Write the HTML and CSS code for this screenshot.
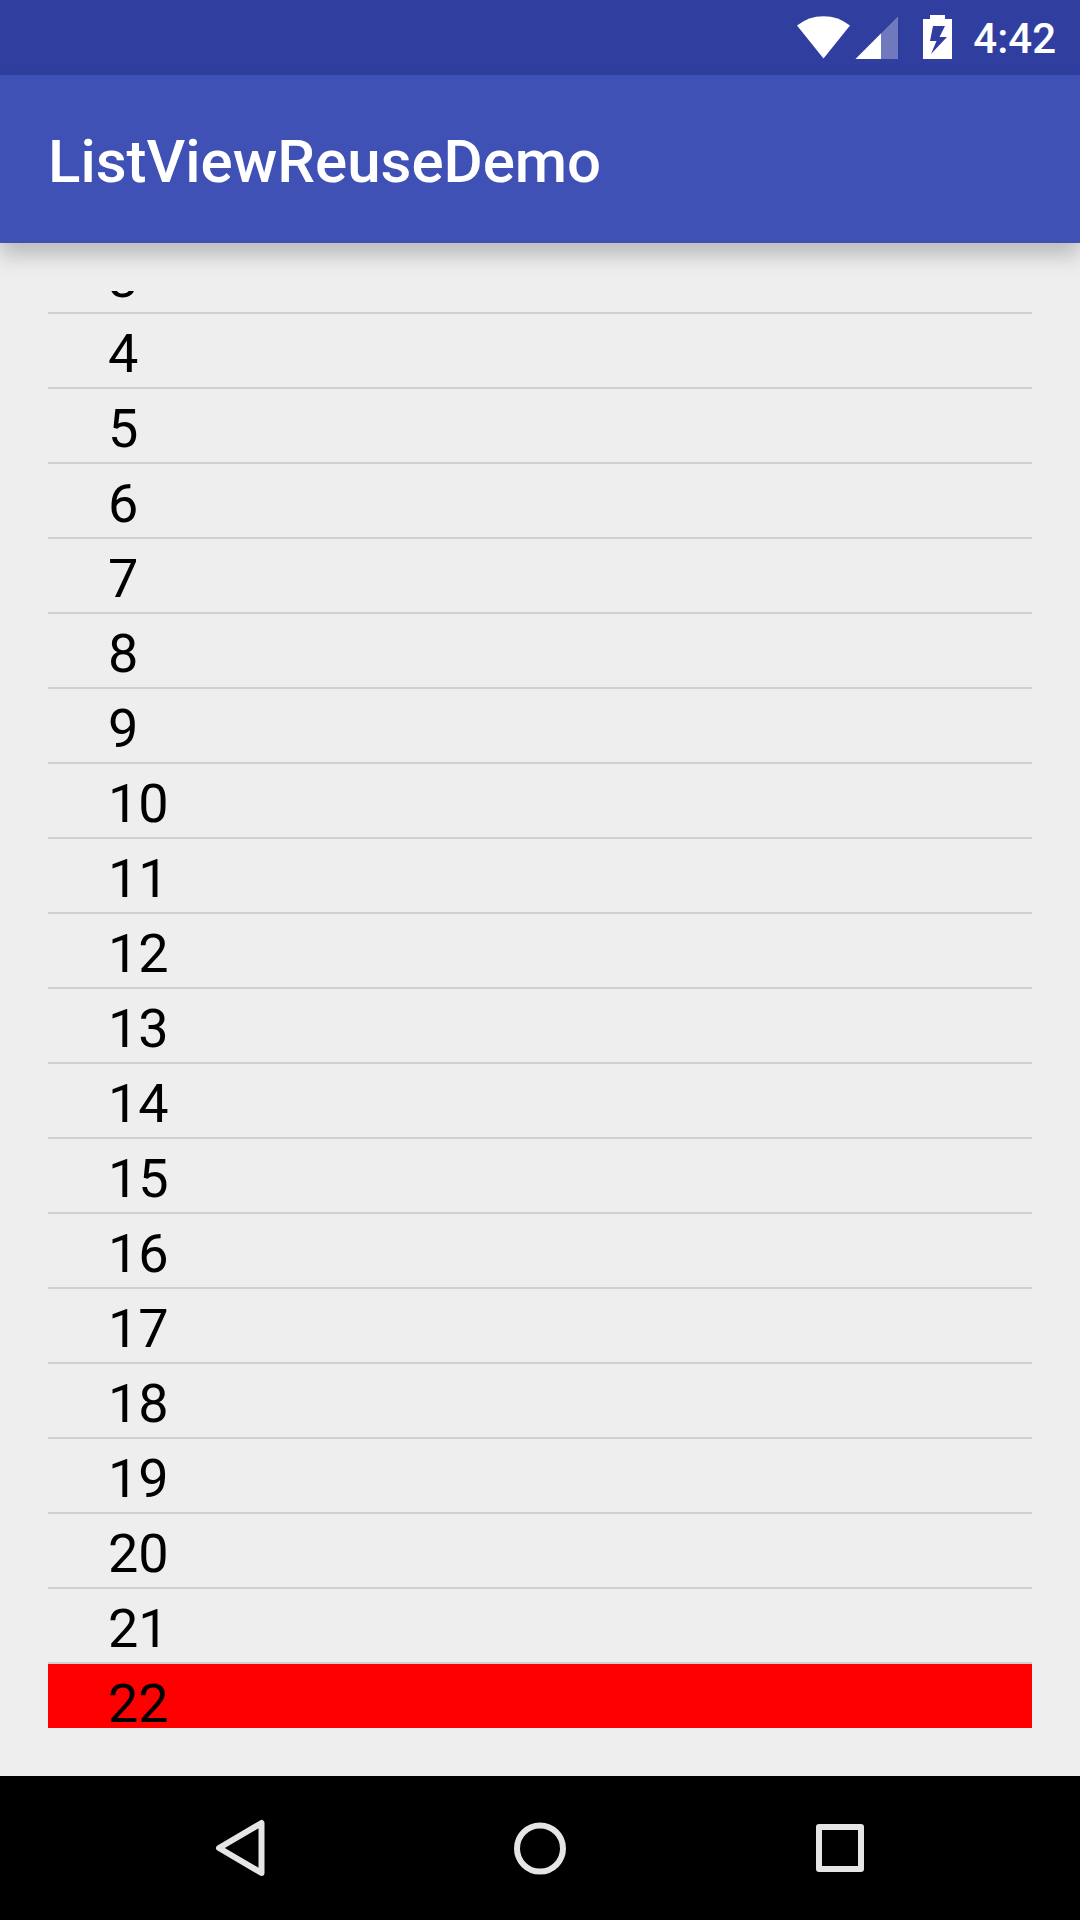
FILE: index.html
```html
<!DOCTYPE html>
<html lang="en">
<head>
<meta charset="utf-8">
<meta name="viewport" content="width=device-width, initial-scale=1">
<title>ListViewReuseDemo</title>
<link rel="stylesheet" href="styles.css">
</head>
<body class="screen">
<div class="status-bar">
  <svg class="icon-wifi" width="54" height="44" viewBox="0 0 54 44" aria-hidden="true"><path d="M1 10.500Q12.500 1.200 27.500 1.200T54 10.500L27.500 43.500Z" fill="#fff"/></svg>
  <svg class="icon-signal" width="43" height="44" viewBox="0 0 43 44" aria-hidden="true"><path d="M43 1.500V44H0.500Z" fill="#7079bd"/><path d="M26 18.500V44H0.500Z" fill="#fff"/></svg>
  <svg class="icon-battery" width="29" height="44" viewBox="0 0 29 44" aria-hidden="true"><path fill="#fff" fill-rule="evenodd" d="M7 0H22V4H29V44H0V4H7ZM10 11L7 26H13.500L8 39L24 22H16.500L22 11Z"/></svg>
  <span class="clock">4:42</span>
</div>
<header class="app-bar"><h1 class="app-title">ListViewReuseDemo</h1></header>
<main class="content">
  <ul class="list">
    <li class="row row-scrolled">3</li>
    <li class="row">4</li>
    <li class="row">5</li>
    <li class="row">6</li>
    <li class="row">7</li>
    <li class="row">8</li>
    <li class="row">9</li>
    <li class="row">10</li>
    <li class="row">11</li>
    <li class="row">12</li>
    <li class="row">13</li>
    <li class="row">14</li>
    <li class="row">15</li>
    <li class="row">16</li>
    <li class="row">17</li>
    <li class="row">18</li>
    <li class="row">19</li>
    <li class="row">20</li>
    <li class="row">21</li>
    <li class="row row-marked">22</li>
  </ul>
</main>
<nav class="nav-bar">
  <button class="nav-button" type="button" aria-label="Back"><svg width="60" height="60" viewBox="0 0 60 60"><path d="M9 30L51.500 5V55Z"/></svg></button>
  <button class="nav-button" type="button" aria-label="Home"><svg width="60" height="60" viewBox="0 0 60 60"><circle cx="30" cy="30.500" r="23"/></svg></button>
  <button class="nav-button" type="button" aria-label="Overview"><svg width="60" height="60" viewBox="0 0 60 60"><rect x="9" y="9" width="42" height="42"/></svg></button>
</nav>
</body>
</html>
```
FILE: styles.css
```css
* {
  box-sizing: border-box;
}

.screen {
  display: flex;
  flex-direction: column;
  height: 100vh;
  margin: 0;
  background: #eee;
  color: #000;
  font-family: Roboto, "Noto Sans", sans-serif;
}

.status-bar {
  display: flex;
  flex: none;
  align-items: center;
  justify-content: flex-end;
  height: 75px;
  padding: 0 24px 1px 0;
  background: #303f9f;
  color: #fff;
}

.icon-signal {
  margin-left: 5px;
}

.icon-battery {
  margin-left: 25px;
}

.clock {
  margin-left: 21px;
  padding-top: 4px;
  font-size: 42px;
  font-weight: 500;
  line-height: 48px;
}

.app-bar {
  display: flex;
  flex: none;
  align-items: center;
  height: 168px;
  padding: 6px 48px 0;
  background: #3f51b5;
  color: #fff;
  box-shadow: 0 12px 20px rgba(0, 0, 0, 0.22);
}

.app-title {
  margin: 0;
  font-size: 60px;
  font-weight: 500;
  line-height: 72px;
}

.content {
  display: flex;
  flex: 1;
  min-height: 0;
  padding: 48px;
}

.list {
  flex: 1;
  margin: 0;
  padding: 0;
  overflow: hidden;
  list-style: none;
}

.row {
  height: 75px;
  padding-left: 60px;
  border-bottom: 2px solid #d0d0d0;
  font-size: 54px;
  line-height: 80px;
}

/* The list is scrolled part of the way past this row. */
.row-scrolled {
  margin-top: -52px;
}

.row-marked {
  background: #f00;
}

.nav-bar {
  display: grid;
  flex: none;
  grid-template-columns: repeat(3, 1fr);
  height: 144px;
  padding: 0 90px;
  background: #000;
}

.nav-button {
  display: flex;
  align-items: center;
  justify-content: center;
  padding: 0;
  border: 0;
  background: none;
}

.nav-button svg {
  fill: none;
  stroke: #e5e5e5;
  stroke-width: 6;
  stroke-linejoin: round;
}
```
